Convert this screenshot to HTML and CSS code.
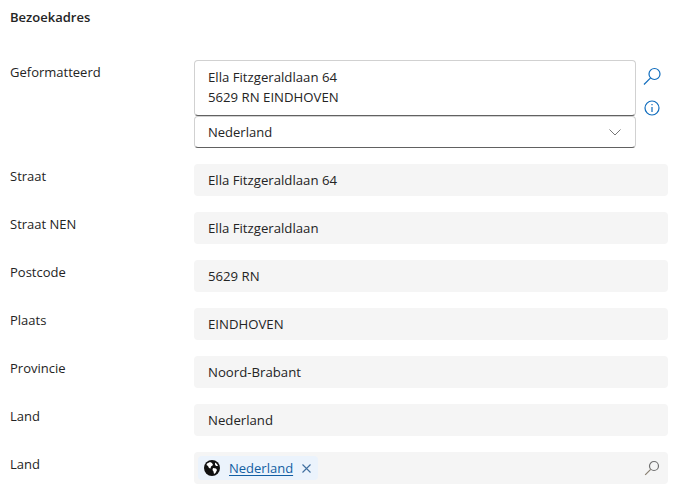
FILE: index.html
```html
<!DOCTYPE html>
<html>
<head>
    <title>Bezoekadres</title>
    <link rel="stylesheet" href="styles.css">
</head>
<body>
    <div class="section">
        <h2>Bezoekadres</h2>

        <div class="form-row address-row">
            <label>Geformatteerd</label>
            <div class="address-box">
                <div class="address-inputs">
                    <div class="address-text">Ella Fitzgeraldlaan 64<br>5629 RN EINDHOVEN</div>
                    <div class="country-select">
                        <span>Nederland</span>
                        <svg width="12" height="7" viewBox="0 0 12 7"><path d="M.5 .5L6 6l5.500-5.500" fill="none" stroke="#777" stroke-width="1"/></svg>
                    </div>
                </div>
                <div class="address-actions">
                    <svg width="20" height="20" viewBox="0 0 20 20"><circle cx="12.500" cy="8" r="5.500" fill="none" stroke="#0f6cbd" stroke-width="1.200"/><path d="M8.600 11.900L2 18.500" fill="none" stroke="#0f6cbd" stroke-width="1.200"/></svg>
                    <svg width="16" height="16" viewBox="0 0 16 16"><circle cx="8" cy="8" r="7" fill="none" stroke="#0f6cbd" stroke-width="1.200"/><path d="M8 7v5M8 4v1.300" fill="none" stroke="#0f6cbd" stroke-width="1.200"/></svg>
                </div>
            </div>
        </div>

        <div class="form-row"><label>Straat</label><div class="field">Ella Fitzgeraldlaan 64</div></div>
        <div class="form-row"><label>Straat NEN</label><div class="field">Ella Fitzgeraldlaan</div></div>
        <div class="form-row"><label>Postcode</label><div class="field">5629 RN</div></div>
        <div class="form-row"><label>Plaats</label><div class="field">EINDHOVEN</div></div>
        <div class="form-row"><label>Provincie</label><div class="field">Noord-Brabant</div></div>
        <div class="form-row"><label>Land</label><div class="field">Nederland</div></div>
        <div class="form-row">
            <label>Land</label>
            <div class="field lookup">
                <div class="tag">
                    <svg width="16" height="16" viewBox="0 0 16 16">
                        <circle cx="8" cy="8" r="8" fill="#111"/>
                        <path d="M3 3.500l3-1.500 2 1 1 2-2 1.500-.5 2-1.500-.5-1-2-1.500-1zM9 8l3 .5 1 1.500-1.500 3-1.500 1-.5-2.500-1-1.500zM11 2.500l2 1.500 1 2-2 0-1-1.500z" fill="#fff"/>
                    </svg>
                    <a href="#">Nederland</a>
                    <svg width="9" height="9" viewBox="0 0 9 9"><path d="M.5 .5l8 8M8.500 .5l-8 8" fill="none" stroke="#3f6f9f" stroke-width="1.100"/></svg>
                </div>
                <svg class="lookup-icon" width="16" height="16" viewBox="0 0 16 16"><circle cx="10" cy="6" r="4.500" fill="none" stroke="#707070" stroke-width="1.200"/><path d="M6.700 9.300L1.200 14.800" fill="none" stroke="#8a8072" stroke-width="1.200"/></svg>
            </div>
        </div>
    </div>
</body>
</html>
```

FILE: styles.css
```css
body {
    margin: 0;
    font-family: "Open Sans", "Noto Sans", sans-serif;
    font-size: 13px;
    color: #242424;
    background: #fff;
}

.section {
    padding: 8px 7px 0 10px;
}

h2 {
    margin: 0 0 34px;
    font-size: 13px;
    font-weight: 600;
    line-height: 18px;
}

.form-row {
    display: flex;
    height: 32px;
    margin-bottom: 16px;
}

.form-row label {
    width: 184px;
    flex-shrink: 0;
    line-height: 24px;
}

.address-row {
    height: 88px;
}

.address-box {
    display: flex;
    flex: 1;
}

.address-inputs {
    width: 442px;
}

.address-text {
    height: 56px;
    box-sizing: border-box;
    padding: 6px 13px;
    font-size: 13.2px;
    line-height: 20px;
    border: 1px solid #d1d1d1;
    border-bottom-color: #616161;
    border-radius: 4px;
}

.country-select {
    display: flex;
    justify-content: space-between;
    align-items: center;
    height: 32px;
    box-sizing: border-box;
    padding: 0 14px 0 13px;
    border: 1px solid #d1d1d1;
    border-bottom-color: #616161;
    border-radius: 4px;
}

.address-actions {
    display: flex;
    flex-direction: column;
    align-items: center;
    gap: 14px;
    flex: 1;
    padding-top: 6px;
}

.field {
    flex: 1;
    display: flex;
    align-items: center;
    padding: 0 14px;
    font-size: 13.2px;
    background: #f5f5f5;
    border-radius: 4px;
}

.lookup {
    justify-content: space-between;
    padding: 0 8px 0 4px;
    font-size: 13px;
}

.tag {
    display: flex;
    align-items: center;
    gap: 9px;
    height: 24px;
    padding: 0 7px 0 6px;
    background: #ebf3fc;
    border-radius: 4px;
}

.tag a {
    color: #115ea3;
    text-underline-offset: 2px;
}
```
